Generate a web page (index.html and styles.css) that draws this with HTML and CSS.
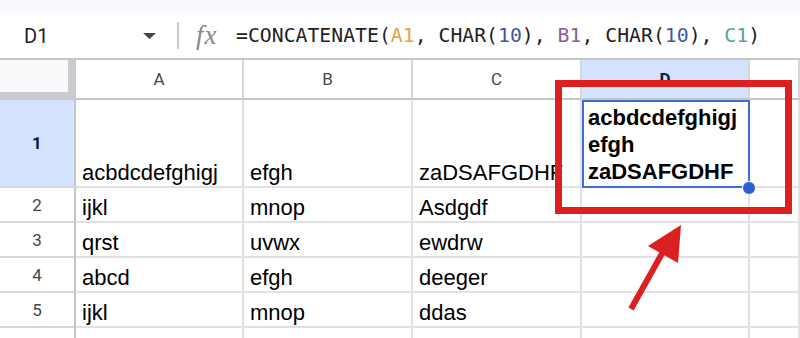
FILE: index.html
```html
<!DOCTYPE html>
<html lang="en">

<head>
    <meta charset="UTF-8">
    <title>Sheet - CONCATENATE</title>
    <link rel="stylesheet" href="styles.css">
</head>

<body>
    <div class="top-strip"></div>

    <div class="formula-bar">
        <div class="name-box">
            <span>D1</span>
            <svg class="caret" width="13" height="6" viewBox="0 0 13 6">
                <path d="M0 0 L13 0 L6.5 6 Z" fill="#444746" />
            </svg>
        </div>
        <div class="divider"></div>
        <span class="fx">fx</span>
        <div class="formula">=CONCATENATE(<span class="ref-a">A1</span>, CHAR(<span class="num">10</span>), <span class="ref-b">B1</span>, CHAR(<span class="num">10</span>), <span class="ref-c">C1</span>)</div>
    </div>

    <div class="sheet">
        <!-- header row -->
        <div class="corner"></div>
        <div class="col-head">A</div>
        <div class="col-head">B</div>
        <div class="col-head">C</div>
        <div class="col-head active">D</div>
        <div class="col-head"></div>

        <!-- row 1 -->
        <div class="row-head active">1</div>
        <div class="cell">acbdcdefghigj</div>
        <div class="cell">efgh</div>
        <div class="cell">zaDSAFGDHF</div>
        <div class="cell selected">
            <div class="wrap">acbdcdefghigj<br>efgh<br>zaDSAFGDHF</div>
            <div class="sel-border"></div>
            <div class="sel-handle"></div>
        </div>
        <div class="cell"></div>

        <!-- row 2 -->
        <div class="row-head">2</div>
        <div class="cell">ijkl</div>
        <div class="cell">mnop</div>
        <div class="cell">Asdgdf</div>
        <div class="cell"></div>
        <div class="cell"></div>

        <!-- row 3 -->
        <div class="row-head">3</div>
        <div class="cell">qrst</div>
        <div class="cell">uvwx</div>
        <div class="cell">ewdrw</div>
        <div class="cell"></div>
        <div class="cell"></div>

        <!-- row 4 -->
        <div class="row-head">4</div>
        <div class="cell">abcd</div>
        <div class="cell">efgh</div>
        <div class="cell">deeger</div>
        <div class="cell"></div>
        <div class="cell"></div>

        <!-- row 5 -->
        <div class="row-head">5</div>
        <div class="cell">ijkl</div>
        <div class="cell">mnop</div>
        <div class="cell">ddas</div>
        <div class="cell"></div>
        <div class="cell"></div>

        <!-- row 6, cut by the window -->
        <div class="row-head last"></div>
        <div class="cell last"></div>
        <div class="cell last"></div>
        <div class="cell last"></div>
        <div class="cell last"></div>
        <div class="cell last"></div>
    </div>

    <!-- annotation drawn over the sheet -->
    <div class="callout"></div>
    <svg class="arrow" width="800" height="338" viewBox="0 0 800 338">
        <line x1="631" y1="309" x2="664" y2="250" stroke="#dc1f1f" stroke-width="6" />
        <polygon points="681,225 648,246 678,263" fill="#dc1f1f" />
    </svg>
</body>

</html>
```

FILE: styles.css
```css
* {
    padding: 0;
    margin: 0;
    box-sizing: border-box;
}

body {
    width: 800px;
    height: 338px;
    overflow: hidden;
    background: white;
    position: relative;
    font-family: "Liberation Sans", Arial, sans-serif;
}

.top-strip {
    height: 13px;
    background: #f8fafd;
}

/* formula bar */

.formula-bar {
    height: 47px;
    display: flex;
    align-items: center;
    background: white;
    border-bottom: 2px solid #c4c7c5;
}

.name-box {
    width: 165px;
    padding-left: 24px;
    padding-right: 9px;
    display: flex;
    align-items: center;
    justify-content: space-between;
    font-family: Roboto, "Liberation Sans", sans-serif;
    font-size: 20px;
    color: #1f1f1f;
}

.caret {
    display: block;
}

.divider {
    width: 2px;
    height: 27px;
    margin-left: 12px;
    background: #c7c7c7;
}

.fx {
    margin-left: 17px;
    width: 24px;
    font-family: "Liberation Serif", serif;
    font-style: italic;
    font-size: 27px;
    letter-spacing: 1px;
    color: #85888c;
}

.formula {
    margin-left: 16px;
    font-family: "DejaVu Sans Mono", "Liberation Mono", monospace;
    font-size: 19.8px;
    color: #1f1f1f;
    white-space: pre;
}

.ref-a {
    color: #e6a23e;
}

.ref-b {
    color: #8b5a9b;
}

.ref-c {
    color: #5e9ea0;
}

.num {
    color: #3d5b9c;
}

/* grid */

.sheet {
    display: grid;
    grid-template-columns: 76px 168px 169px 169px 168px 1fr;
    grid-template-rows: 40px 88px 35px 35px 35px 35px 10px;
}

.corner {
    background: #f8f9fa;
    border-right: 8px solid #c9cbce;
    border-bottom: 8px solid #c9cbce;
}

.col-head,
.row-head {
    display: flex;
    align-items: center;
    justify-content: center;
    font-family: Roboto, "Liberation Sans", sans-serif;
    font-size: 17px;
    color: #444746;
    background: white;
    border-right: 2px solid #d5d7d9;
    border-bottom: 2px solid #c4c7c5;
}

.row-head {
    border-right: 2px solid #c4c7c5;
    border-bottom: 2px solid #d5d7d9;
}

.col-head.active,
.row-head.active {
    background: #d3e3fd;
    color: #0b1f3d;
    font-weight: bold;
}

.cell {
    display: flex;
    align-items: flex-end;
    padding: 0 5px 1px 6px;
    font-size: 22px;
    line-height: 25px;
    color: #000;
    white-space: nowrap;
    overflow: hidden;
    border-right: 2px solid #e1e1e1;
    border-bottom: 2px solid #e1e1e1;
}

.last {
    border-bottom: none;
}

.cell.selected {
    position: relative;
    overflow: visible;
    font-weight: bold;
    padding-bottom: 1px;
}

.wrap {
    line-height: 27px;
}

.sel-border {
    position: absolute;
    left: 0;
    top: 0;
    right: -2px;
    bottom: -2px;
    border: 2px solid #3b6fd4;
}

.sel-handle {
    position: absolute;
    right: -8px;
    bottom: -9px;
    width: 14px;
    height: 14px;
    border-radius: 50%;
    background: #2c60d0;
    border: 1px solid white;
}

/* red annotation */

.callout {
    position: absolute;
    left: 555px;
    top: 80px;
    width: 237px;
    height: 134px;
    border: 7px solid #dc1f1f;
}

.arrow {
    position: absolute;
    left: 0;
    top: 0;
    pointer-events: none;
}
```
